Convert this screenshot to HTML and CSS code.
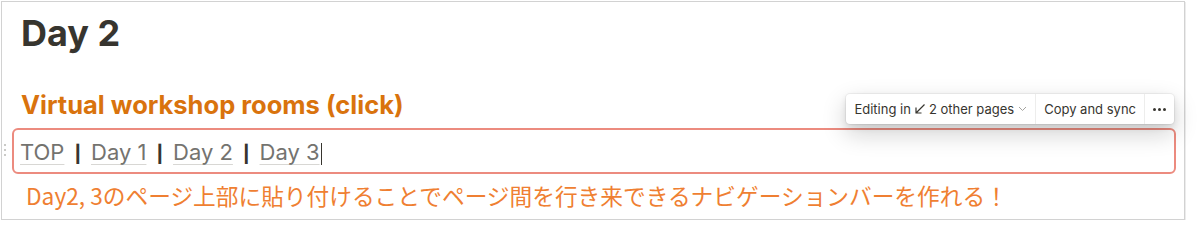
FILE: index.html
```html
<!DOCTYPE html>
<html lang="ja">
  <head>
    <meta charset="UTF-8" />
    <meta name="viewport" content="width=device-width, initial-scale=1.0" />
    <title>Day 2</title>
    <link rel="stylesheet" href="styles.css">
  </head>
  <body>
    <div class="frame">
      <h1 class="page-title">Day 2</h1>

      <h2 class="rooms-heading">Virtual workshop rooms (click)</h2>

      <div class="synced-block">
        <div class="drag-handle">
          <span></span><span></span><span></span>
        </div>

        <div class="sync-toolbar">
          <div class="toolbar-item">
            Editing in
            <svg class="arrow-icon" width="12" height="12" viewBox="0 0 12 12">
              <path d="M10.5 1.5 L2 10 M2 4.5 V10 H7.5" fill="none" stroke="#37352f" stroke-width="1.2" />
            </svg>
            2 other pages
            <svg class="chevron-icon" width="9" height="6" viewBox="0 0 9 6">
              <path d="M1 1 L4.5 4.5 L8 1" fill="none" stroke="#a5a4a0" stroke-width="1" />
            </svg>
          </div>
          <div class="toolbar-item">Copy and sync</div>
          <div class="toolbar-item more">
            <svg width="13" height="3" viewBox="0 0 13 3">
              <circle cx="1.5" cy="1.5" r="1.5" fill="#37352f" />
              <circle cx="6.5" cy="1.5" r="1.5" fill="#37352f" />
              <circle cx="11.5" cy="1.5" r="1.5" fill="#37352f" />
            </svg>
          </div>
        </div>

        <div class="nav-line">
          <a href="#" class="nav-link">TOP</a>
          <span class="nav-sep">|</span>
          <a href="#" class="nav-link">Day 1</a>
          <span class="nav-sep">|</span>
          <a href="#" class="nav-link">Day 2</a>
          <span class="nav-sep">|</span>
          <a href="#" class="nav-link">Day 3</a><span class="caret"></span>
        </div>
      </div>

      <p class="note">Day2, 3のページ上部に貼り付けることでページ間を行き来できるナビゲーションバーを作れる！</p>
    </div>
  </body>
</html>
```

FILE: styles.css
```css
body {
  margin: 0;
  background-color: #fff;
  font-family: Inter, "Noto Sans", sans-serif;
  color: #37352f;
  -webkit-font-smoothing: antialiased;
}

.frame {
  margin: 1px 0 0 1px;
  width: 1184px;
  height: 219px;
  box-sizing: border-box;
  border: 1px solid #d2d2d2;
  box-shadow: 1px 1px 0 #ececec;
  padding: 0 8px 0 10px;
}

.page-title {
  margin: 10px 0 0 9px;
  font-size: 36px;
  font-weight: 700;
  line-height: 1.2;
  color: #37352f;
}

.rooms-heading {
  margin: 35px 0 0 9px;
  font-size: 25.5px;
  font-weight: 700;
  line-height: 30px;
  color: #d9730d;
}

.synced-block {
  position: relative;
  margin-top: 8px;
  height: 46px;
  box-sizing: border-box;
  border: 2px solid #ec8b7f;
  border-radius: 6px;
  padding: 6px 0 2px 6px;
}

.drag-handle {
  position: absolute;
  left: -10px;
  top: 14px;
  display: flex;
  flex-direction: column;
  gap: 3px;
}

.drag-handle span {
  width: 2px;
  height: 2px;
  border-radius: 50%;
  background-color: #b9b8b5;
}

.nav-line {
  display: flex;
  align-items: baseline;
  font-size: 22px;
  line-height: 33px;
}

.nav-link {
  color: #74736f;
  text-decoration: underline;
  text-decoration-color: #d8d7d4;
  text-decoration-thickness: 1px;
  text-underline-offset: 4px;
}

.nav-sep {
  margin: 0 10px;
  font-size: 17px;
  font-weight: 800;
  color: #37352f;
}

.caret {
  align-self: center;
  margin-left: 1px;
  width: 1px;
  height: 22px;
  background-color: #37352f;
}

.sync-toolbar {
  position: absolute;
  right: 0;
  bottom: calc(100% + 6px);
  display: flex;
  height: 30px;
  background-color: #fff;
  border-radius: 4px;
  box-shadow: 0 0 0 1px rgba(15, 15, 15, 0.05),
    0 3px 6px rgba(15, 15, 15, 0.1),
    0 9px 24px rgba(15, 15, 15, 0.2);
  font-size: 13px;
  color: #37352f;
}

.toolbar-item {
  display: flex;
  align-items: center;
  gap: 3px;
  padding: 0 8px;
  white-space: nowrap;
}

.toolbar-item + .toolbar-item {
  border-left: 1px solid #ededec;
}

.chevron-icon {
  margin-left: 1px;
}

.note {
  margin: 7px 0 0 14px;
  font-family: "Noto Sans CJK JP", sans-serif;
  font-size: 22.7px;
  line-height: 1.3;
  color: #ef7f32;
}
```
